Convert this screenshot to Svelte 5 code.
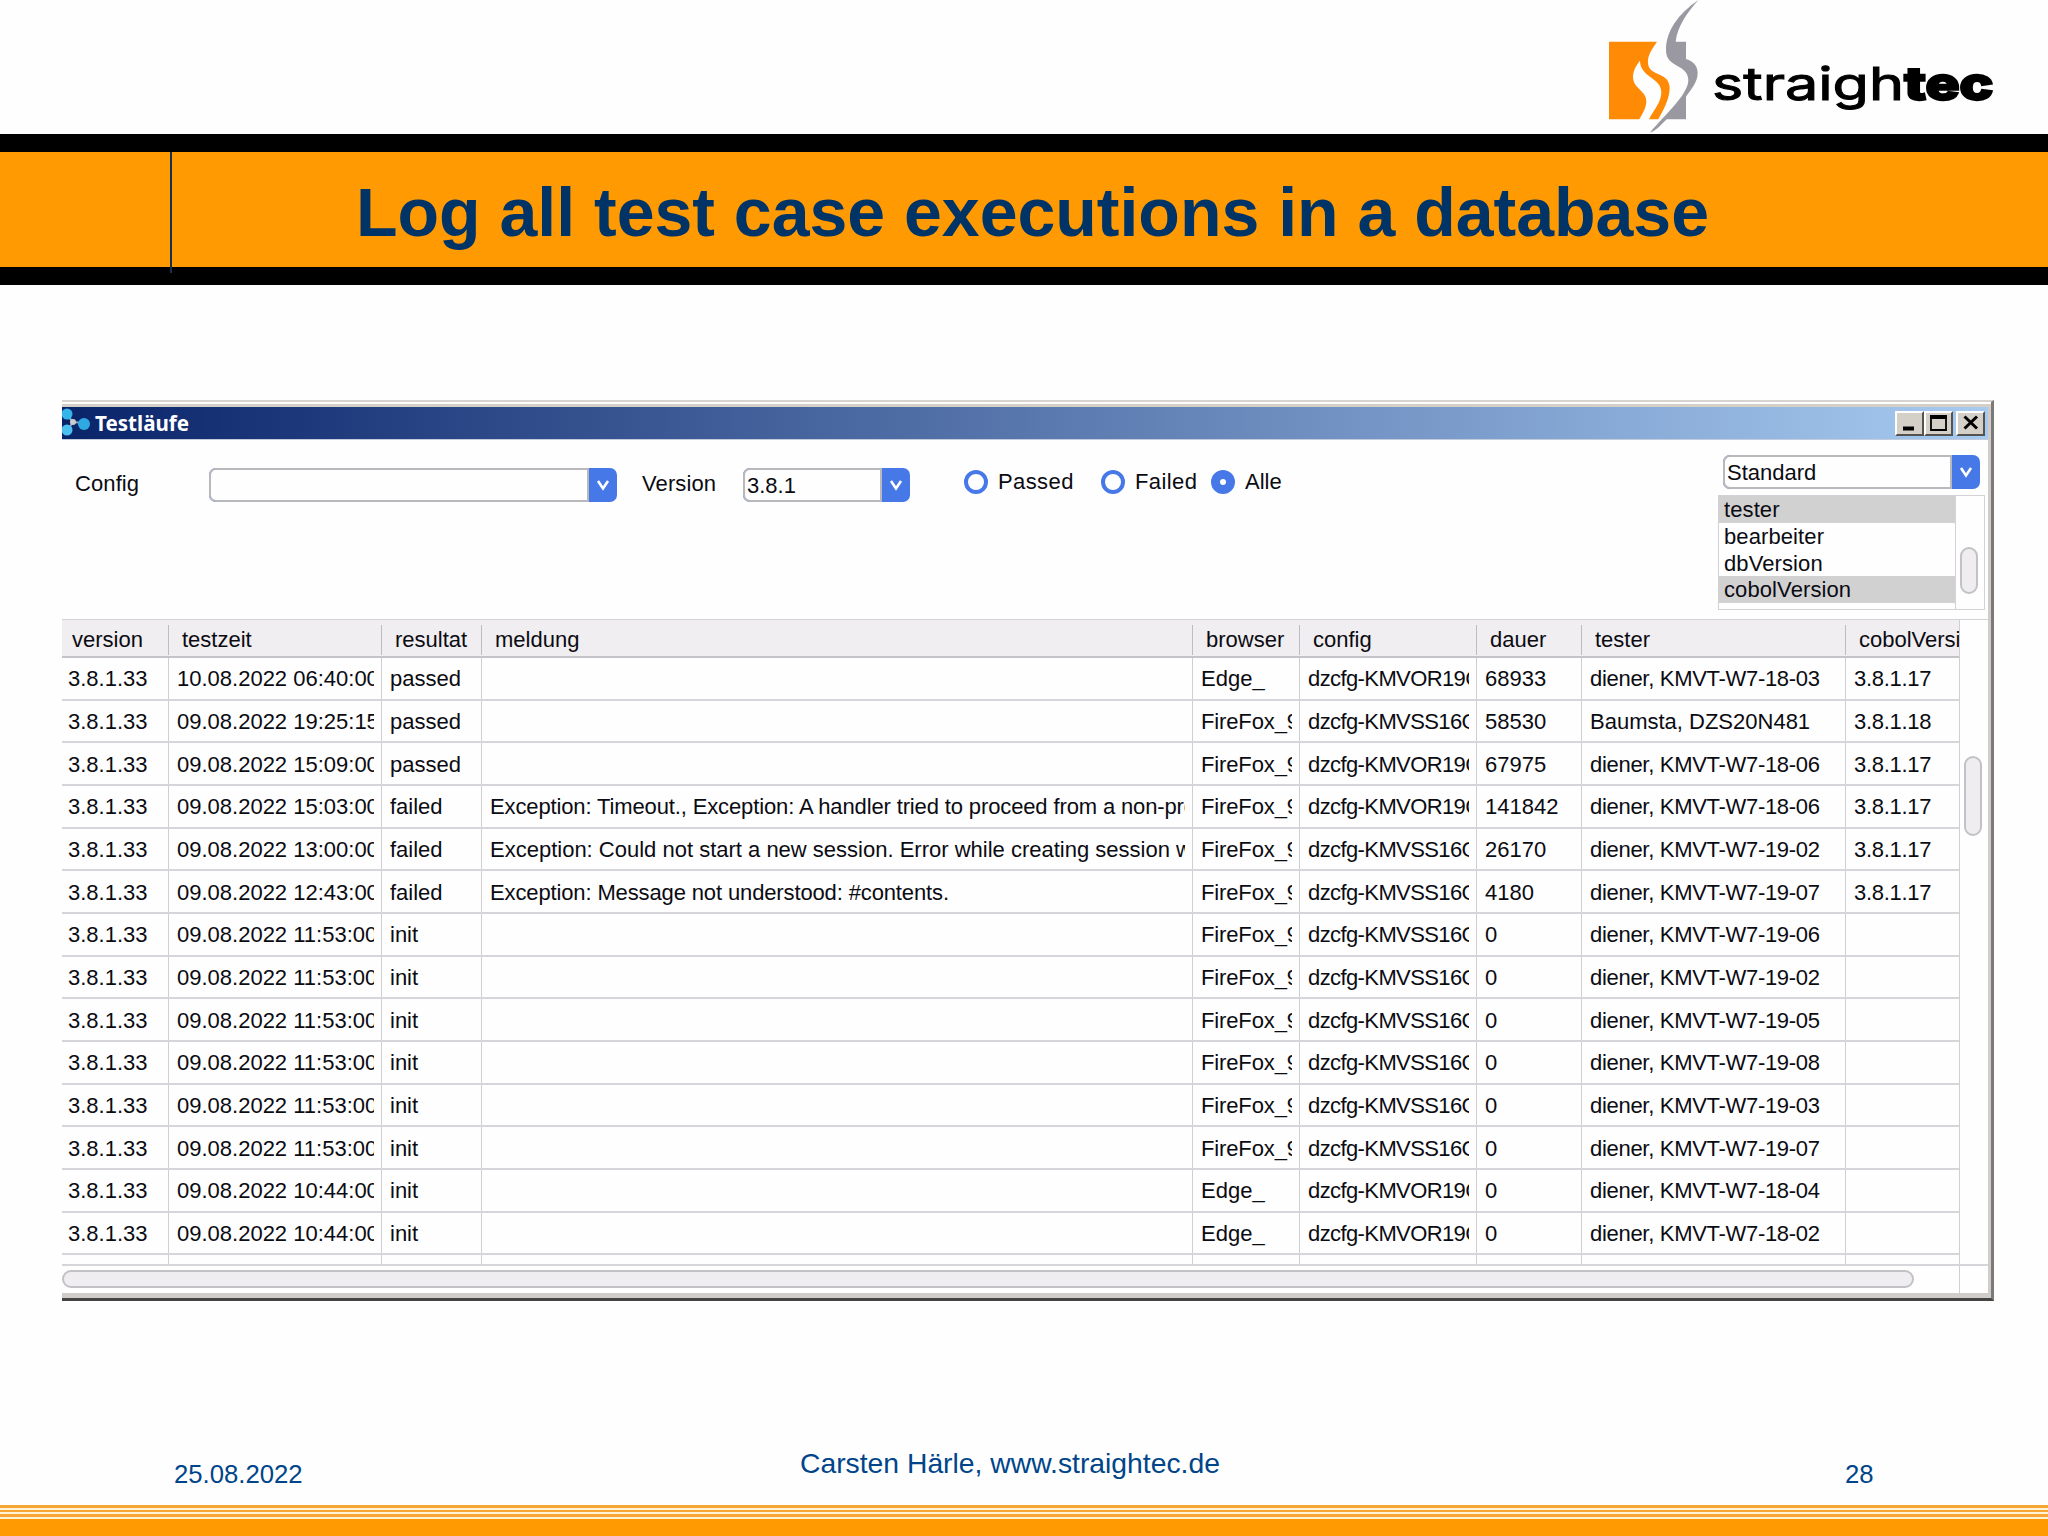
<script lang="ts">
	const columns = ['version', 'testzeit', 'resultat', 'meldung', 'browser', 'config', 'dauer', 'tester', 'cobolVersion'];

	const timeout = 'Exception: Timeout., Exception: A handler tried to proceed from a non-pro';
	const noSession = 'Exception: Could not start a new session. Error while creating session w';
	const notUnderstood = 'Exception: Message not understood: #contents.';

	const runs = [
		['3.8.1.33', '10.08.2022 06:40:00', 'passed', '', 'Edge_', 'dzcfg-KMVOR19C', '68933', 'diener, KMVT-W7-18-03', '3.8.1.17'],
		['3.8.1.33', '09.08.2022 19:25:15', 'passed', '', 'FireFox_9', 'dzcfg-KMVSS16C', '58530', 'Baumsta, DZS20N481', '3.8.1.18'],
		['3.8.1.33', '09.08.2022 15:09:00', 'passed', '', 'FireFox_9', 'dzcfg-KMVOR19C', '67975', 'diener, KMVT-W7-18-06', '3.8.1.17'],
		['3.8.1.33', '09.08.2022 15:03:00', 'failed', timeout, 'FireFox_9', 'dzcfg-KMVOR19C', '141842', 'diener, KMVT-W7-18-06', '3.8.1.17'],
		['3.8.1.33', '09.08.2022 13:00:00', 'failed', noSession, 'FireFox_9', 'dzcfg-KMVSS16C', '26170', 'diener, KMVT-W7-19-02', '3.8.1.17'],
		['3.8.1.33', '09.08.2022 12:43:00', 'failed', notUnderstood, 'FireFox_9', 'dzcfg-KMVSS16C', '4180', 'diener, KMVT-W7-19-07', '3.8.1.17'],
		['3.8.1.33', '09.08.2022 11:53:00', 'init', '', 'FireFox_9', 'dzcfg-KMVSS16C', '0', 'diener, KMVT-W7-19-06', ''],
		['3.8.1.33', '09.08.2022 11:53:00', 'init', '', 'FireFox_9', 'dzcfg-KMVSS16C', '0', 'diener, KMVT-W7-19-02', ''],
		['3.8.1.33', '09.08.2022 11:53:00', 'init', '', 'FireFox_9', 'dzcfg-KMVSS16C', '0', 'diener, KMVT-W7-19-05', ''],
		['3.8.1.33', '09.08.2022 11:53:00', 'init', '', 'FireFox_9', 'dzcfg-KMVSS16C', '0', 'diener, KMVT-W7-19-08', ''],
		['3.8.1.33', '09.08.2022 11:53:00', 'init', '', 'FireFox_9', 'dzcfg-KMVSS16C', '0', 'diener, KMVT-W7-19-03', ''],
		['3.8.1.33', '09.08.2022 11:53:00', 'init', '', 'FireFox_9', 'dzcfg-KMVSS16C', '0', 'diener, KMVT-W7-19-07', ''],
		['3.8.1.33', '09.08.2022 10:44:00', 'init', '', 'Edge_', 'dzcfg-KMVOR19C', '0', 'diener, KMVT-W7-18-04', ''],
		['3.8.1.33', '09.08.2022 10:44:00', 'init', '', 'Edge_', 'dzcfg-KMVOR19C', '0', 'diener, KMVT-W7-18-02', ''],
		['', '', '', '', '', '', '', '', '']
	];

	const fields = ['tester', 'bearbeiter', 'dbVersion', 'cobolVersion'];
	const selected = ['tester', 'cobolVersion'];

	const filters = ['Passed', 'Failed', 'Alle'];
	let filter = $state('Alle');

	// letter spacing differs a little with the kind of value
	function spacing(value: string): string {
		if (value.startsWith('dzcfg')) return 'narrow';
		if (value.startsWith('diener') || value.startsWith('3.8.1.1')) return 'snug';
		if (value === timeout || value === notUnderstood || value.startsWith('FireFox')) return 'tight';
		return '';
	}
</script>

{#snippet combo(value: string, kind: string)}
	<div class="combo {kind}">
		<span class="value">{value}</span>
		<span class="arrow">
			<svg width="14" height="12" viewBox="0 0 14 12">
				<path d="M2 2 L7 9.5 L12 2" fill="none" stroke="#fff" stroke-width="2.6" />
			</svg>
		</span>
	</div>
{/snippet}

<div class="slide">
	<header>
		<svg class="logo" width="420" height="134" viewBox="0 0 1260 402">
			<path
				fill="#ff8a05"
				d="M57 125 H201 C186 148 172 165 174 190 C178 232 239 214 239 264 C239 300 215 338 205 358 H177 C190 332 214 308 214 277 C214 232 150 232 150 182 C138 198 126 215 130 240 C136 268 168 273 169 303 C169 325 155 345 148 358 H57 Z"
			/>
			<path
				fill="#9a99a2"
				d="M325 0 C265 42 228 92 228 150 C228 206 294 190 295 240 C295 285 218 350 180 398 C198 392 214 374 230 358 H288 V290 C306 265 323 245 323 219 C323 194 305 182 288 177 V125 H257 C262 80 290 40 325 0 Z"
			/>
			<text class="brand" x="366" y="299" textLength="576" lengthAdjust="spacingAndGlyphs">straigh</text>
			<text class="brand heavy" x="943" y="299" textLength="267" lengthAdjust="spacingAndGlyphs">tec</text>
		</svg>
	</header>

	<div class="banner">
		<div class="edge"></div>
		<h1>Log all test case executions in a database</h1>
	</div>

	<main class="window">
		<div class="titlebar">
			<svg width="30" height="32" viewBox="0 0 30 32">
				<path d="M4 7 L11 15 L22 16 M11 15 L5 24" stroke="#8fa3b8" stroke-width="2" fill="none" />
				<circle cx="5" cy="7" r="5.5" fill="#35b4ea" />
				<circle cx="5" cy="23" r="5.5" fill="#4cc0ee" />
				<circle cx="22" cy="17" r="6" fill="#2fa9e2" />
				<circle cx="11" cy="15" r="3" fill="#c9ccd0" />
			</svg>
			<span class="caption">Testläufe</span>
			<button class="win" aria-label="Minimize">
				<svg width="28" height="24" viewBox="0 0 28 24"><path d="M7 17.5 H18" stroke="#000" stroke-width="4" /></svg>
			</button>
			<button class="win" aria-label="Maximize">
				<svg width="28" height="24" viewBox="0 0 28 24">
					<path d="M6 5.5 H21 V19 H6 Z" fill="none" stroke="#000" stroke-width="1.8" />
					<path d="M5 6 H22" stroke="#000" stroke-width="4" />
				</svg>
			</button>
			<button class="win close" aria-label="Close">
				<svg width="28" height="24" viewBox="0 0 28 24"><path d="M7.5 5.5 L20 17.5 M20 5.5 L7.5 17.5" stroke="#000" stroke-width="3" /></svg>
			</button>
		</div>

		<div class="toolbar">
			<span class="label config">Config</span>
			{@render combo('', 'wide')}
			<span class="label version">Version</span>
			{@render combo('3.8.1', 'short')}
			<div class="radios">
				{#each filters as name}
					<label>
						<input type="radio" value={name} bind:group={filter} />
						<span>{name}</span>
					</label>
				{/each}
			</div>
			<div class="fields">
				{@render combo('Standard', 'preset')}
				<div class="list">
					<ul>
						{#each fields as field}
							<li class:selected={selected.includes(field)}>{field}</li>
						{/each}
					</ul>
					<div class="track"><div class="thumb"></div></div>
				</div>
			</div>
		</div>

		<div class="results">
			<div class="grid">
				<div class="row head">
					{#each columns as column}
						<div class="cell"><span>{column}</span></div>
					{/each}
				</div>
				{#each runs as run}
					<div class="row">
						{#each run as value}
							<div class="cell"><span class={spacing(value)}>{value}</span></div>
						{/each}
					</div>
				{/each}
			</div>
			<div class="track"><div class="thumb"></div></div>
		</div>
		<div class="hscroll">
			<div class="track"><div class="thumb"></div></div>
			<div class="corner"></div>
		</div>
	</main>

	<footer>
		<span class="date">25.08.2022</span>
		<span class="author">Carsten Härle, www.straightec.de</span>
		<span class="page">28</span>
	</footer>
	<div class="stripes">
		<i></i><i></i><i></i>
		<div class="solid"></div>
	</div>
</div>

<style>
	:global(body) {
		background: #fefefe;
	}

	.slide {
		width: 2048px;
		height: 1536px;
		overflow: hidden;
		display: flex;
		flex-direction: column;
		background: #fefefe;
		font-family: 'Liberation Sans', Arial, sans-serif;
		font-size: 22px;
		color: #0b0b12;
	}

	header {
		height: 134px;
		display: flex;
		justify-content: flex-end;
		padding-right: 38px;
	}

	.brand {
		font-family: Inter, sans-serif;
		font-size: 135px;
		font-weight: 400;
		fill: #000;
		stroke: #000;
		stroke-width: 3px;
	}

	.brand.heavy {
		font-weight: 800;
		stroke-width: 7px;
	}

	/* Banner */
	.banner {
		box-sizing: border-box;
		height: 151px;
		border-top: 18px solid #000;
		border-bottom: 18px solid #000;
		background: #ff9a03;
		display: flex;
	}

	.edge {
		width: 170px;
		height: 121px;
		border-right: 2px solid #17304f;
	}

	h1 {
		flex: 1;
		margin: 0;
		padding-right: 155px;
		text-align: center;
		font-size: 68px;
		line-height: 121px;
		color: #003366;
	}

	/* Window */
	.window {
		box-sizing: border-box;
		width: 1932px;
		height: 901px;
		margin: 115px 0 0 62px;
		border-top: 2px solid #d8d2d0;
		border-right: 3px solid #7c7a78;
		border-bottom: 3px solid #454443;
		padding: 5px 3px 5px 0;
		background: linear-gradient(#fff 2px, #d4d0c8 2px, #d4d0c8 5px, #cfccca 5px);
		display: flex;
		flex-direction: column;
	}

	.titlebar {
		height: 32px;
		border-bottom: 1px solid #c3cbdc;
		background: linear-gradient(to right, #0a246a, #a6caf0);
		display: flex;
		align-items: center;
	}

	.caption {
		flex: 1;
		padding-left: 3px;
		font-family: 'Noto Sans', sans-serif;
		font-size: 20.6px;
		font-weight: 700;
		color: #fff;
	}

	.win {
		box-sizing: border-box;
		width: 29px;
		height: 25px;
		padding: 0;
		border: 2px solid;
		border-color: #fff #55534f #55534f #fff;
		background: #d4d0c8;
		display: flex;
		align-items: center;
		justify-content: center;
	}

	.win svg {
		flex: none;
	}

	.win.close {
		margin: 0 3px;
	}

	.toolbar {
		height: 179px;
		background: #fefefe;
		display: flex;
		align-items: flex-start;
	}

	.label {
		margin-top: 31px;
		line-height: 26px;
		letter-spacing: 0.1px;
	}

	.label.config {
		width: 134px;
		padding-left: 13px;
	}

	.label.version {
		width: 101px;
		padding-left: 25px;
	}

	.combo {
		box-sizing: border-box;
		height: 34px;
		margin-top: 28px;
		border-radius: 7px;
		background: #4678e8;
		display: flex;
	}

	.combo .value {
		box-sizing: border-box;
		flex: 1;
		border: 2px solid #b9b8bc;
		border-radius: 7px 0 0 7px;
		background: #fefefe;
		padding-left: 2px;
		line-height: 32px;
	}

	.combo .arrow {
		width: 28px;
		display: flex;
		align-items: center;
		justify-content: center;
	}

	.wide {
		width: 408px;
	}

	.short {
		width: 167px;
	}

	.combo.preset {
		width: 257px;
		margin: 15px 0 0 5px;
	}

	.preset .value {
		line-height: 31px;
	}

	.radios {
		flex: 1;
		margin: 29px 0 0 54px;
		display: flex;
	}

	label {
		display: flex;
		align-items: center;
		gap: 10px;
		letter-spacing: 0.4px;
	}

	label:nth-child(1) {
		width: 137px;
	}

	label:nth-child(2) {
		width: 110px;
	}

	label:nth-child(3) {
		letter-spacing: 0;
	}

	input {
		appearance: none;
		box-sizing: border-box;
		width: 24px;
		height: 24px;
		margin: 0;
		border: 4px solid #4678e8;
		border-radius: 50%;
	}

	input:checked {
		border-width: 9px;
	}

	.fields {
		width: 270px;
	}

	.list {
		box-sizing: border-box;
		width: 267px;
		height: 115px;
		margin-top: 6px;
		border: 1px solid #d3d2d6;
		display: flex;
	}

	.list ul {
		flex: 1;
		margin: 0;
		padding: 0;
		list-style: none;
		border-right: 1px solid #d3d2d6;
	}

	.list li {
		height: 26.8px;
		padding-left: 5px;
		line-height: 28px;
		letter-spacing: 0.1px;
	}

	.list li.selected {
		background: #d2d1d2;
	}

	.list .track {
		width: 28px;
	}

	.thumb {
		box-sizing: border-box;
		border: 2px solid #c2c1c5;
		border-radius: 9px;
		background: #efedef;
	}

	.list .thumb {
		width: 18px;
		height: 47px;
		margin: 51px 0 0 4px;
	}

	/* Result table */
	.results {
		width: 1926px;
		height: 644px;
		border-top: 1px solid #d3d2d6;
		background: #fefefe;
		display: flex;
		overflow: hidden;
	}

	.grid {
		box-sizing: border-box;
		width: 1898px;
		border-right: 1px solid #cfced2;
		overflow: hidden;
	}

	.row {
		box-sizing: border-box;
		height: 42.66px;
		display: grid;
		grid-template-columns: 107px 213px 100px 711px 107px 177px 105px 264px 113px;
		border-bottom: 2px solid #d6d5d9;
	}

	.cell {
		border-right: 1px solid #cfced2;
		padding: 2px 7px 0 8px;
		min-width: 0;
		display: flex;
		align-items: center;
	}

	.cell:first-child {
		padding-left: 6px;
	}

	.cell:last-child {
		border-right: 0;
	}

	.cell span {
		flex: 1;
		overflow: hidden;
		white-space: nowrap;
		line-height: 30px;
	}

	.cell .tight {
		letter-spacing: -0.13px;
	}

	.cell .snug {
		letter-spacing: -0.3px;
	}

	.cell .narrow {
		letter-spacing: -0.6px;
	}

	.row.head {
		height: 38px;
		padding: 5px 0 2px;
		background: #f0eef0;
		border-bottom: 2px solid #c4c3c7;
	}

	.head .cell {
		border-color: #bdbcc0;
		padding: 0 0 0 13px;
	}

	.head .cell:first-child {
		padding-left: 10px;
	}

	.results .thumb {
		width: 18px;
		height: 80px;
		margin: 136px 0 0 4px;
	}

	.hscroll {
		flex: 1;
		background: #fefefe;
		border-top: 2px solid #d6d5d9;
		display: flex;
	}

	.hscroll .track {
		box-sizing: border-box;
		width: 1898px;
		border-right: 1px solid #cfced2;
	}

	.hscroll .thumb {
		width: 1852px;
		height: 18px;
		margin-top: 4px;
	}

	/* Footer */
	footer {
		flex: 1;
		display: flex;
		align-items: flex-end;
		color: #00458a;
		font-size: 25.7px;
		line-height: 30px;
	}

	.date {
		width: 626px;
		padding: 0 0 16px 174px;
	}

	.author {
		width: 1045px;
		padding-bottom: 27px;
		font-size: 28.3px;
	}

	.page {
		padding-bottom: 16px;
	}

	.stripes {
		height: 31px;
		display: flex;
		flex-direction: column;
		gap: 2px;
		background: #fff3d6;
	}

	.stripes i {
		height: 2.6px;
		background: #f7a634;
	}

	.solid {
		flex: 1;
		background: #ff9a03;
	}
</style>
